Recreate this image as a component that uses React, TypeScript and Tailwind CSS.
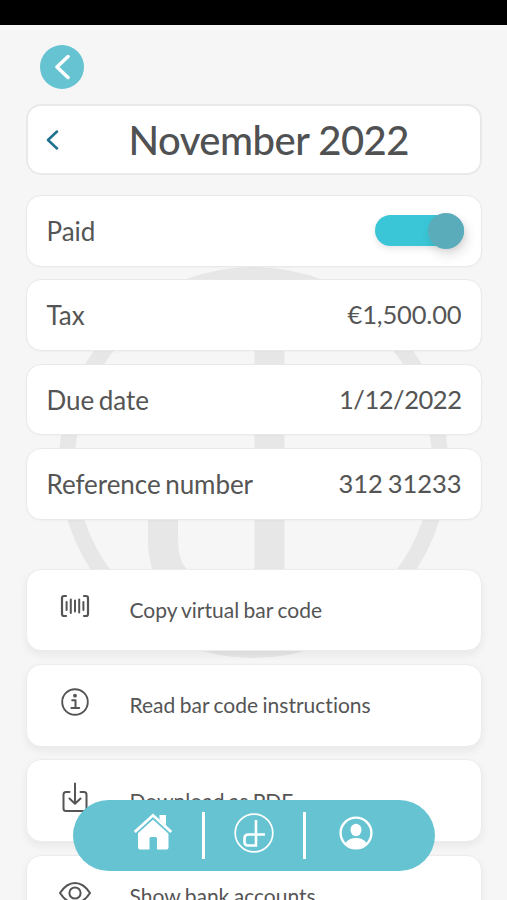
/*
 * Monthly tax payment screen
 * Detail rows, bar code actions and the floating bottom navigation
 */

import type { ReactNode } from "react";

interface DetailRowProps {
  label: string;
  children: ReactNode;
}

interface ActionCardProps {
  label: string;
  icon: ReactNode;
}

function Watermark() {
  return (
    <svg
      className="absolute left-[58px] top-[266px] h-[393px] w-[391px]"
      viewBox="58 266 391 393"
      fill="none"
      stroke="#e7e7e7"
    >
      <ellipse cx="253.5" cy="462.5" rx="186.5" ry="187.5" strokeWidth="16" />
      <path d="M269.5 330V590H208Q163 590 163 540V510Q163 475 198 475H400" strokeWidth="30" />
    </svg>
  );
}

function BarcodeIcon() {
  return (
    <svg className="h-6 w-[30px]" viewBox="0 0 30 24" fill="none" stroke="#555" strokeLinecap="round">
      <path d="M6 2H4Q2 2 2 4V20Q2 22 4 22H6M24 2h2Q28 2 28 4V20Q28 22 26 22h-2" strokeWidth="2.2" />
      <path d="M6.6 8v8M10.8 5.5v13.5M15 6.5v11M19.2 5.5v13M23.4 8v8" strokeWidth="2" />
    </svg>
  );
}

function InfoIcon() {
  return (
    <svg className="size-7" viewBox="0 0 28 28" fill="none" stroke="#555">
      <circle cx="14" cy="14" r="12.8" strokeWidth="1.9" />
      <path d="M11.2 12.2h3.3v7.6M10.4 20h7.8" strokeWidth="2" strokeLinecap="round" strokeLinejoin="round" />
      <circle cx="14" cy="7.7" r="1.9" fill="#555" stroke="none" />
    </svg>
  );
}

function DownloadIcon() {
  return (
    <svg className="h-[31px] w-[26px]" viewBox="0 0 26 31" fill="none" stroke="#555" strokeWidth="2" strokeLinecap="round">
      <path d="M7.5 10H4Q1.5 10 1.5 12.5V26.5Q1.5 29 4 29H22Q24.5 29 24.5 26.5V12.5Q24.5 10 22 10H18.5" />
      <path d="M13 1.5V21.5M7.5 16.5L13 21.8L18.5 16.5" strokeLinejoin="round" />
    </svg>
  );
}

function EyeIcon() {
  return (
    <svg className="h-[22px] w-8" viewBox="0 0 32 22" fill="none" stroke="#555" strokeWidth="2" strokeLinejoin="round">
      <path d="M1 11Q7.5 1 16 1T31 11Q24.5 21 16 21T1 11Z" />
      <circle cx="16" cy="11" r="5.6" />
    </svg>
  );
}

function HomeIcon() {
  return (
    <svg className="h-[37px] w-[38px]" viewBox="0 0 38 37" fill="white">
      <path d="M19 5.5L34.5 19V34.5Q34.5 36.5 32.5 36.5H23V25.5Q23 24 21.5 24H17Q15.5 24 15.5 25.5V36.5H6Q4 36.5 4 34.5V19Z" />
      <path d="M25.5 2H32V13L25.5 7Z" />
      <path d="M0.8 20L19 3.5L37.2 20" fill="none" stroke="#66c3d2" strokeWidth="4.5" />
      <path d="M0.8 19L19 2.3L37.2 19" fill="none" stroke="white" strokeWidth="2.8" />
    </svg>
  );
}

function BrandIcon() {
  return (
    <svg className="size-10" viewBox="0 0 40 40" fill="none" stroke="white">
      <circle cx="20" cy="20" r="18.8" strokeWidth="1.7" />
      <path d="M22 7V32.5H14Q10.5 32.5 10.5 29V25.5Q10.5 21.5 14.5 21.5H31" strokeWidth="2.6" />
    </svg>
  );
}

function ProfileIcon() {
  return (
    <svg className="size-[34px]" viewBox="0 0 34 34">
      <circle cx="17" cy="17" r="15.4" fill="none" stroke="white" strokeWidth="2.4" />
      <ellipse cx="17" cy="14" rx="5.5" ry="6.2" fill="white" />
      <path d="M6.5 27Q10 22 17 22T27.5 27Q23 32 17 32T6.5 27Z" fill="white" />
    </svg>
  );
}

function DetailRow({ label, children }: DetailRowProps) {
  return (
    <div className="flex h-[71.5px] items-center justify-between rounded-[15px] border border-[#e9e9e9] bg-white px-5 text-[26px] leading-none shadow-[0_1px_2px_rgba(0,0,0,0.03)]">
      <span className="tracking-[-0.05px] [word-spacing:-2px]">{label}</span>
      {children}
    </div>
  );
}

function ActionCard({ label, icon }: ActionCardProps) {
  return (
    <div className="flex h-[82.5px] shrink-0 items-center rounded-[15px] border border-[#ececec] bg-white shadow-[0_4px_8px_rgba(0,0,0,0.06)]">
      <div className="flex w-24 justify-center pb-[7px]">{icon}</div>
      <span className="pb-px pl-[7px] text-[21px] leading-none tracking-[0.01px] [word-spacing:-1px]">{label}</span>
    </div>
  );
}

export default function App() {
  return (
    <div className="relative h-[900px] w-[507px] overflow-hidden bg-[#f6f6f6] font-['Lato',sans-serif] text-[#555] [font-variant-ligatures:none]">
      <Watermark />
      <div className="relative flex flex-col">
        <div className="h-[25px] bg-black" />

        <header className="px-10 pt-5">
          <button className="flex size-11 items-center justify-center rounded-full bg-[#66c3d2]">
            <svg className="h-[26px] w-4" viewBox="0 0 16 26" fill="none" stroke="white" strokeWidth="3.5" strokeLinecap="round" strokeLinejoin="round">
              <path d="M14 2.5L3 13L14 23.5" />
            </svg>
          </button>
        </header>

        <main className="flex flex-col px-[25.5px] pt-[15px]">
          <div className="flex h-[71px] items-center rounded-[15px] border-2 border-[#e9e9e9] bg-white px-[18px]">
            <svg className="h-5 w-[13px]" viewBox="0 0 13 20" fill="none" stroke="#1f6f8f" strokeWidth="2.5" strokeLinecap="round" strokeLinejoin="round">
              <path d="M11 1.5L2 10L11 18.5" />
            </svg>
            <h1 className="ml-[70px] whitespace-nowrap text-[40px] font-medium leading-none tracking-[-0.5px] text-[#505152]">November 2022</h1>
          </div>

          <div className="mt-5 flex flex-col gap-[12.9px]">
            <DetailRow label="Paid">
              <span className="mr-[-3px] flex h-[31px] w-[89px] items-center justify-end rounded-full bg-[#3ac6d6] shadow-[0_3px_6px_rgba(0,0,0,0.1)]">
                <span className="size-9 shrink-0 rounded-full bg-[#5bacba] shadow-[3px_6px_12px_rgba(0,0,0,0.12)]" />
              </span>
            </DetailRow>
            <DetailRow label="Tax">
              <span className="mr-[-1px] text-[25.5px] tracking-[-0.15px]">€1,500.00</span>
            </DetailRow>
            <DetailRow label="Due date">
              <span className="mr-[-1px] text-[25.5px] tracking-[-0.45px]">1/12/2022</span>
            </DetailRow>
            <DetailRow label="Reference number">
              <span className="mr-[-1px] text-[25.5px] tracking-[-0.05px] [word-spacing:-1.5px]">312 31233</span>
            </DetailRow>
          </div>

          <div className="mt-[49px] flex flex-col gap-[12.9px]">
            <ActionCard label="Copy virtual bar code" icon={<BarcodeIcon />} />
            <ActionCard label="Read bar code instructions" icon={<InfoIcon />} />
            <ActionCard label="Download as PDF" icon={<DownloadIcon />} />
            <ActionCard label="Show bank accounts" icon={<EyeIcon />} />
          </div>
        </main>
      </div>

      {/* Floating navigation, stays above the action list */}
      <nav className="absolute bottom-[29px] left-[73px] flex h-[71px] w-[362px] items-center rounded-full bg-[#66c3d2] pb-[6px] pl-[61px]">
        <span className="pb-[2px]"><HomeIcon /></span>
        <span className="ml-[30px] mt-[5px] h-[47px] w-[3px] bg-white" />
        <span className="ml-[29px]"><BrandIcon /></span>
        <span className="ml-[29px] mt-[5px] h-[47px] w-[3px] bg-white" />
        <span className="ml-[33px]"><ProfileIcon /></span>
      </nav>
    </div>
  );
}
